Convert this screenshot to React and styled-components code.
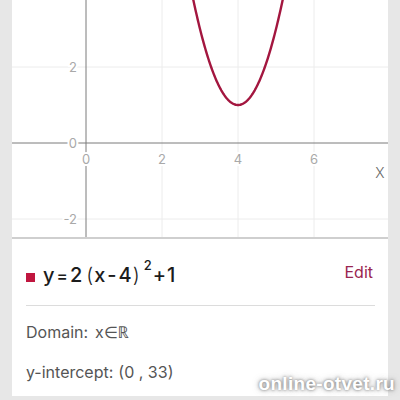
import React from 'react'
import styled, { createGlobalStyle } from 'styled-components'

const GlobalStyle = createGlobalStyle`
  html, body {
    margin: 0;
    padding: 0;
    background: #e7e7e7;
  }
  body {
    font-family: Inter, "Noto Sans", "Liberation Sans", sans-serif;
  }
`

const Screen = styled.div`
  position: relative;
  width: 400px;
  height: 400px;
  box-sizing: border-box;
  padding: 0 12px 4px 12px;
  display: flex;
  flex-direction: column;
  overflow: hidden;
`

const GraphPanel = styled.div`
  height: 237px;
  background: #fff;
  border-bottom: 2px solid #cfcfcf;
`

const Card = styled.div`
  flex: 1;
  background: #fff;
  padding: 0 13px 0 14px;
  display: flex;
  flex-direction: column;
`

const FuncRow = styled.div`
  display: flex;
  align-items: center;
  justify-content: space-between;
  height: 67px;
  border-bottom: 1px solid #dcdcdc;
  padding-top: 6px;
  box-sizing: border-box;
`

const Swatch = styled.span`
  width: 9px;
  height: 9px;
  background: #c0163f;
  margin-right: 8px;
  align-self: center;
  margin-top: 4px;
`

const Equation = styled.div`
  display: flex;
  align-items: baseline;
  font-size: 20px;
  font-weight: 500;
  color: #1c1c1c;
`

const Op = styled.span`
  margin: 0 ${(p) => p.$gap}px;
  font-size: ${(p) => p.$size || 20}px;
`

const Paren = styled.span`
  font-weight: 300;
  margin: 0 1px;
`

const Sup = styled.span`
  font-size: 13px;
  position: relative;
  top: -12px;
  margin-left: 3px;
`

const EditLink = styled.span`
  font-size: 16px;
  color: #9a2550;
  margin-right: 2px;
  margin-top: -6px;
`

const InfoRow = styled.div`
  font-size: 16px;
  color: #555;
  height: 40px;
  display: flex;
  align-items: center;
  padding-top: 12px;
  box-sizing: border-box;
`

const Spacer = styled.span`
  display: inline-block;
  width: ${(p) => p.$w}px;
`

const Watermark = styled.div`
  position: absolute;
  right: 5px;
  bottom: 5px;
  font-family: "Liberation Sans", Arial, sans-serif;
  font-weight: 700;
  font-size: 19px;
  color: #fff;
  letter-spacing: 0.3px;
  text-shadow: 0 0 3px rgba(90, 90, 90, 0.8), 0 0 6px rgba(120, 120, 120, 0.6);
`

const W = 376
const H = 237
const OX = 74
const OY = 143
const S = 38

const parabola = () => {
  const pts = []
  for (let x = 2.7; x <= 5.3; x += 0.02) {
    const y = 2 * (x - 4) * (x - 4) + 1
    pts.push(`${(OX + x * S).toFixed(2)},${(OY - y * S).toFixed(2)}`)
  }
  return 'M' + pts.join(' L')
}

const labelStyle = {
  fontSize: 13,
  fill: '#a9a9a9',
  stroke: '#fff',
  strokeWidth: 4,
  paintOrder: 'stroke',
  fontFamily: 'Inter, "Noto Sans", sans-serif',
}

const Graph = () => (
  <svg width={W} height={H} viewBox={`0 0 ${W} ${H}`} style={{ display: 'block' }}>
    {[2, 4, 6].map((v) => (
      <line key={'v' + v} x1={OX + v * S} x2={OX + v * S} y1={0} y2={H} stroke="#ececec" strokeWidth="1" />
    ))}
    {[2, -2].map((v) => (
      <line key={'h' + v} x1={0} x2={W} y1={OY - v * S} y2={OY - v * S} stroke="#ececec" strokeWidth="1" />
    ))}
    <line x1={0} x2={W} y1={OY} y2={OY} stroke="#7a7a7a" strokeWidth="1" />
    <line x1={OX} x2={OX} y1={0} y2={H} stroke="#7a7a7a" strokeWidth="1" />
    {[2, 0, -2].map((v) => (
      <text key={'yl' + v} x={OX - 9} y={OY - v * S + 5} textAnchor="end" style={labelStyle}>
        {v}
      </text>
    ))}
    {[0, 2, 4, 6].map((v) => (
      <text key={'xl' + v} x={OX + v * S} y={OY + 21} textAnchor="middle" style={labelStyle}>
        {v}
      </text>
    ))}
    <text x={368} y={178} textAnchor="middle" style={{ fontSize: 14, fill: '#666', fontFamily: 'Inter, sans-serif', fontWeight: 300 }}>
      X
    </text>
    <path d={parabola()} fill="none" stroke="#a3163f" strokeWidth="2.4" strokeLinejoin="round" />
  </svg>
)

export default function App() {
  return (
    <Screen>
      <GlobalStyle />
      <GraphPanel>
        <Graph />
      </GraphPanel>
      <Card>
        <FuncRow>
          <Equation>
            <Swatch />
            y<Op $gap={2} $size={17}>=</Op>2<Spacer $w={3} />
            <Paren>(</Paren>x<Op $gap={2}>-</Op>4<Paren>)</Paren>
            <Sup>2</Sup>
            <Op $gap={1}>+</Op>1
          </Equation>
          <EditLink>Edit</EditLink>
        </FuncRow>
        <InfoRow>
          Domain:<Spacer $w={7} />x∈ℝ
        </InfoRow>
        <InfoRow>y-intercept:<Spacer $w={5} />(0 , 33)</InfoRow>
      </Card>
      <Watermark>online-otvet.ru</Watermark>
    </Screen>
  )
}
